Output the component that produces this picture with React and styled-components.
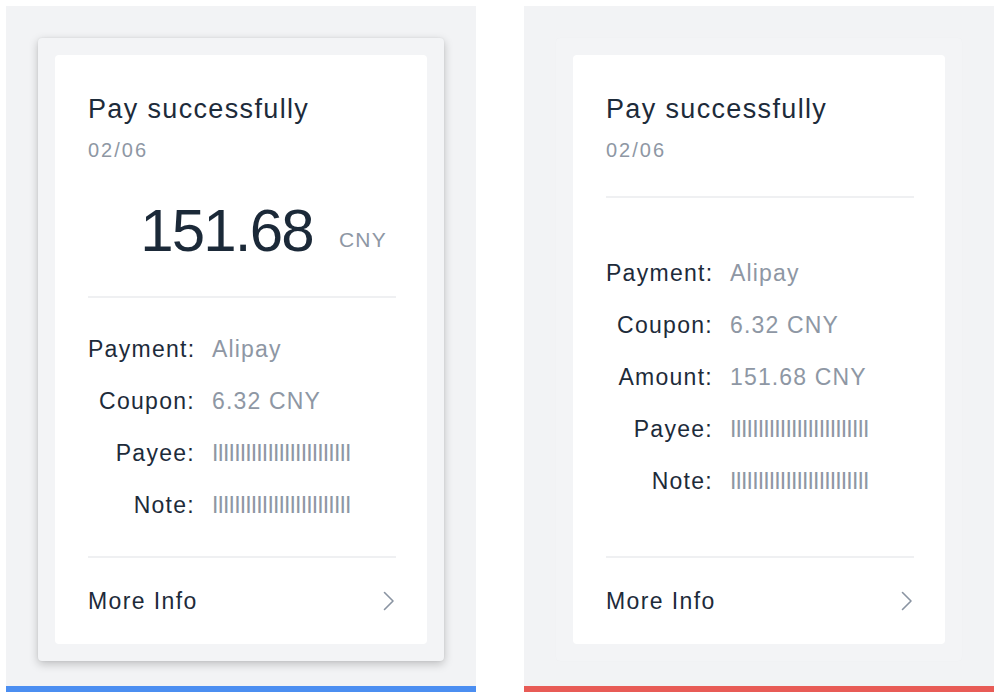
import React from 'react';
import styled, { createGlobalStyle } from 'styled-components';

const GlobalStyle = createGlobalStyle`
  html, body {
    margin: 0;
    padding: 0;
    background: #ffffff;
  }
  body {
    font-family: "Liberation Sans", Arial, sans-serif;
  }
`;

const BARS = 'IIIIIIIIIIIIIIIIIIIIIIIII';

const receipts = [
  {
    accent: '#4b8ef1',
    raised: true,
    amount: '151.68',
    rows: [
      { label: 'Payment:', value: 'Alipay' },
      { label: 'Coupon:', value: '6.32 CNY' },
      { label: 'Payee:', value: BARS, bars: true },
      { label: 'Note:', value: BARS, bars: true },
    ],
  },
  {
    accent: '#e85b56',
    raised: false,
    rows: [
      { label: 'Payment:', value: 'Alipay' },
      { label: 'Coupon:', value: '6.32 CNY' },
      { label: 'Amount:', value: '151.68 CNY' },
      { label: 'Payee:', value: BARS, bars: true },
      { label: 'Note:', value: BARS, bars: true },
    ],
  },
];

const Chevron = () => (
  <StChevron viewBox="0 0 12 20" fill="none">
    <polyline
      points="1.5,1.5 10,10 1.5,18.5"
      stroke="currentColor"
      strokeWidth={1.6}
      strokeLinecap="round"
      strokeLinejoin="round"
    />
  </StChevron>
);

const Receipt = ({ data }) => {
  return (
    <StPanel $accent={data.accent}>
      <StFrame $raised={data.raised}>
        <StCard>
          <StTitle>Pay successfully</StTitle>
          <StDate>02/06</StDate>
          {data.amount && (
            <StAmountRow>
              <StAmount>{data.amount}</StAmount>
              <StCurrency>CNY</StCurrency>
            </StAmountRow>
          )}
          <StDivider $top={data.amount ? 29 : 32} />
          <StDetails>
            {data.rows.map((row) => (
              <StRow key={row.label}>
                <StLabel>{row.label}</StLabel>
                <StValue $bars={row.bars}>{row.value}</StValue>
              </StRow>
            ))}
          </StDetails>
          <StDivider $top={0} />
          <StFooter>
            <StMore>More Info</StMore>
            <Chevron />
          </StFooter>
        </StCard>
      </StFrame>
    </StPanel>
  );
};

const App = () => {
  return (
    <>
      <GlobalStyle />
      <StPage>
        {receipts.map((r) => (
          <Receipt key={r.accent} data={r} />
        ))}
      </StPage>
    </>
  );
};

export default App;

const StPage = styled.div`
  display: flex;
  gap: 48px;
  padding: 6px;
`;

const StPanel = styled.div`
  width: 406px;
  height: 648px;
  padding: 32px 32px 0;
  background-color: #f2f3f5;
  border-bottom: 6px solid ${(p) => p.$accent};
`;

const StFrame = styled.div`
  padding: 17px;
  background-color: #f3f4f6;
  border-radius: 4px;
  box-shadow: ${(p) =>
    p.$raised
      ? '0 3px 10px rgba(0, 0, 0, 0.22), 0 0 2px rgba(0, 0, 0, 0.08)'
      : '0 0 1px rgba(0, 0, 0, 0.04)'};
`;

const StCard = styled.div`
  display: flex;
  flex-direction: column;
  height: 589px;
  padding: 36px 31px 0 33px;
  box-sizing: border-box;
  background-color: #ffffff;
  border-radius: 4px;
  color: #1d2b3a;
  letter-spacing: 0.08em;
`;

const StTitle = styled.div`
  font-size: 27px;
  line-height: 36px;
  letter-spacing: 0.05em;
`;

const StDate = styled.div`
  margin-top: 9px;
  font-size: 20px;
  line-height: 28px;
  letter-spacing: 0.1em;
  color: #8e97a4;
`;

const StAmountRow = styled.div`
  display: flex;
  align-items: flex-end;
  justify-content: flex-end;
  gap: 26px;
  margin-top: 31px;
  padding-right: 9px;
`;

const StAmount = styled.div`
  font-size: 60px;
  line-height: 72px;
  letter-spacing: -1.8px;
  color: #1b2938;
`;

const StCurrency = styled.div`
  font-size: 21px;
  line-height: 54px;
  letter-spacing: 0.06em;
  color: #8e97a4;
`;

const StDivider = styled.div`
  height: 2px;
  margin-top: ${(p) => p.$top}px;
  background-color: #eff0f2;
`;

const StDetails = styled.div`
  display: flex;
  flex: 1;
  flex-direction: column;
  justify-content: center;
`;

const StRow = styled.div`
  display: grid;
  grid-template-columns: 107px 1fr;
  column-gap: 17px;
  font-size: 23px;
  line-height: 52px;
`;

const StLabel = styled.div`
  text-align: right;
  white-space: nowrap;
`;

const StValue = styled.div`
  color: #8e97a4;
  white-space: nowrap;
  letter-spacing: ${(p) => (p.$bars ? '-0.85px' : '0.05em')};
`;

const StFooter = styled.div`
  display: flex;
  align-items: center;
  justify-content: space-between;
  height: 86px;
  padding-right: 1px;
`;

const StMore = styled.div`
  font-size: 23px;
  line-height: 30px;
  letter-spacing: 0.06em;
`;

const StChevron = styled.svg`
  width: 12px;
  height: 20px;
  color: #8a94a2;
`;
